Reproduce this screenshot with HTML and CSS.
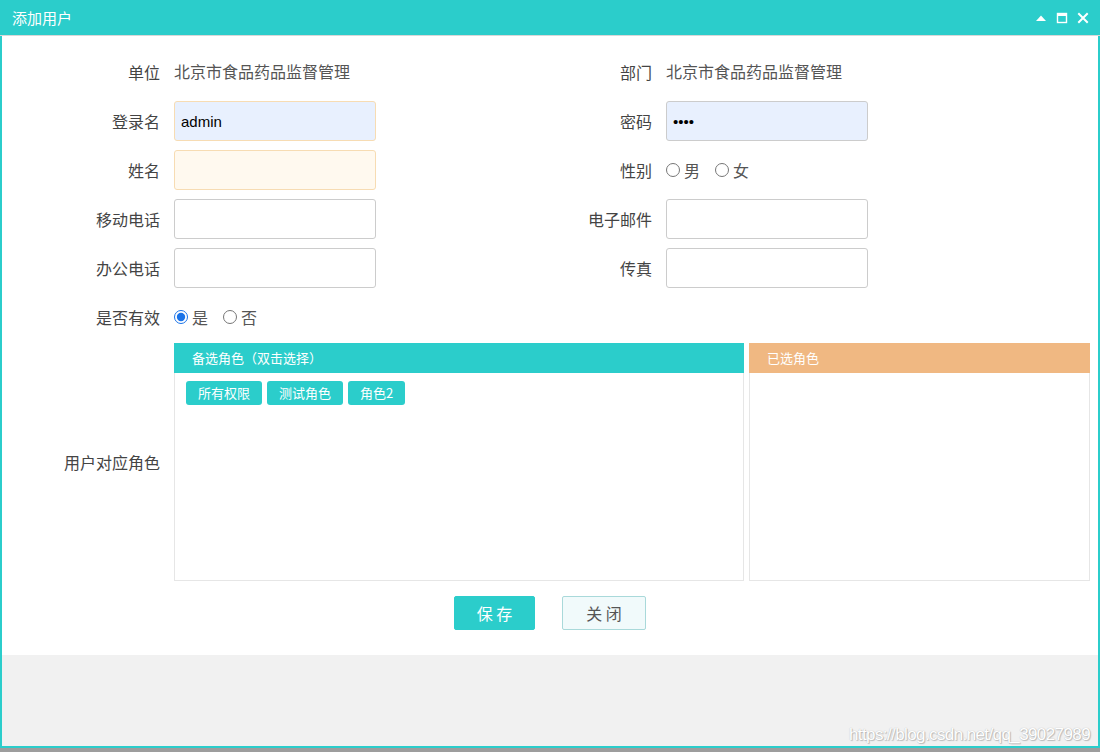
FILE: index.html
```html
<!DOCTYPE html>
<html lang="zh">
<head>
<meta charset="utf-8">
<title>添加用户</title>
<link rel="stylesheet" href="styles.css">
</head>
<body>
<div class="window">
  <div class="titlebar">
    <span class="title">添加用户</span>
    <div class="tools">
      <svg width="12" height="12" viewBox="0 0 12 12"><path d="M1 9 L6 3.5 L11 9 Z" fill="#fff"/></svg>
      <svg width="12" height="12" viewBox="0 0 12 12"><rect x="1.5" y="1.5" width="9" height="9" fill="none" stroke="#fff" stroke-width="1.4"/><rect x="1" y="1" width="10" height="3" fill="#fff"/></svg>
      <svg width="12" height="12" viewBox="0 0 12 12"><path d="M2 2 L10 10 M10 2 L2 10" stroke="#fff" stroke-width="2" stroke-linecap="square"/></svg>
    </div>
  </div>
  <div class="content">
    <div class="form">
      <div class="row">
        <div class="half">
          <label class="lbl">单位</label>
          <span class="val">北京市食品药品监督管理</span>
        </div>
        <div class="half right">
          <label class="lbl">部门</label>
          <span class="val">北京市食品药品监督管理</span>
        </div>
      </div>
      <div class="row">
        <div class="half">
          <label class="lbl">登录名</label>
          <input class="inp autofill req" type="text" value="admin">
        </div>
        <div class="half right">
          <label class="lbl">密码</label>
          <input class="inp autofill" type="password" value="1234">
        </div>
      </div>
      <div class="row">
        <div class="half">
          <label class="lbl">姓名</label>
          <input class="inp req soft" type="text">
        </div>
        <div class="half right">
          <label class="lbl">性别</label>
          <span class="radios">
            <label class="radio"><input type="radio" name="sex">男</label>
            <label class="radio"><input type="radio" name="sex">女</label>
          </span>
        </div>
      </div>
      <div class="row">
        <div class="half">
          <label class="lbl">移动电话</label>
          <input class="inp" type="text">
        </div>
        <div class="half right">
          <label class="lbl">电子邮件</label>
          <input class="inp" type="text">
        </div>
      </div>
      <div class="row">
        <div class="half">
          <label class="lbl">办公电话</label>
          <input class="inp" type="text">
        </div>
        <div class="half right">
          <label class="lbl">传真</label>
          <input class="inp" type="text">
        </div>
      </div>
      <div class="row">
        <div class="half">
          <label class="lbl">是否有效</label>
          <span class="radios">
            <label class="radio"><input type="radio" name="valid" checked>是</label>
            <label class="radio"><input type="radio" name="valid">否</label>
          </span>
        </div>
      </div>
      <div class="roles-row">
        <label class="lbl">用户对应角色</label>
        <div class="panels">
          <div class="panel avail">
            <div class="panel-head">备选角色（双击选择）</div>
            <div class="panel-body">
              <span class="tag">所有权限</span>
              <span class="tag">测试角色</span>
              <span class="tag">角色2</span>
            </div>
          </div>
          <div class="panel chosen">
            <div class="panel-head">已选角色</div>
            <div class="panel-body"></div>
          </div>
        </div>
      </div>
      <div class="buttons">
        <button class="btn primary">保 存</button>
        <button class="btn plain">关 闭</button>
      </div>
    </div>
    <div class="footer-area">
      <span class="watermark">https://blog.csdn.net/qq_39027989</span>
    </div>
  </div>
</div>
</body>
</html>
```
FILE: styles.css
```css
html, body {
  margin: 0;
  padding: 0;
  background: #9d9d9d;
  font-family: "Noto Sans CJK SC", "Microsoft YaHei", sans-serif;
}
.window {
  width: 1100px;
  height: 748px;
  box-sizing: border-box;
  border: 2px solid #2bcdcb;
  border-top: 0;
  background: #fff;
  display: flex;
  flex-direction: column;
}
.titlebar {
  height: 35px;
  margin: 0 -2px;
  padding: 0 12px;
  background: #2bcdcb;
  border-bottom: 1px solid #d8d8d8;
  display: flex;
  align-items: center;
  justify-content: space-between;
  flex-shrink: 0;
}
.title {
  color: #fff;
  font-size: 15px;
  line-height: 20px;
}
.tools {
  display: flex;
  gap: 9px;
  margin-right: -1px;
}
.tools svg { display: block; }
.content {
  flex: 1;
  display: flex;
  flex-direction: column;
}
.form {
  padding-top: 16px;
  height: 603px;
}
.row {
  display: flex;
  height: 40px;
  margin-bottom: 9px;
}
.half {
  display: flex;
  align-items: center;
  width: 570px;
}
.half.right {
  width: 300px;
}
.lbl {
  width: 158px;
  padding-right: 14px;
  text-align: right;
  font-size: 16px;
  line-height: 22px;
  color: #444;
  flex-shrink: 0;
}
.right .lbl {
  width: 80px;
}
.val {
  font-size: 16px;
  color: #555;
  margin-top: -2px;
}
.inp {
  width: 202px;
  height: 40px;
  box-sizing: border-box;
  border: 1px solid #cccccc;
  border-radius: 3px;
  padding: 0 6px;
  font-family: "Liberation Sans", Arial, sans-serif;
  font-size: 15px;
  color: #000;
  background: #fff;
  outline: none;
}
.inp.autofill {
  background: #e8f0fe;
}
.inp.req {
  border-color: #f7dcb3;
}
.inp.soft {
  background: #fff9ef;
}
.radios {
  display: flex;
  gap: 15px;
  font-size: 16px;
  color: #555;
}
.radio {
  display: flex;
  align-items: center;
}
.radio input {
  margin: 0 4px 0 0;
  width: 14px;
  height: 14px;
  accent-color: #1a73e8;
}
.row:nth-child(6) {
  margin-bottom: 6px;
}
.roles-row {
  display: flex;
  align-items: center;
  height: 238px;
}
.panels {
  display: flex;
  gap: 5px;
  height: 238px;
}
.panel {
  display: flex;
  flex-direction: column;
  border: 1px solid #e6e6e6;
  border-top: 0;
}
.avail { width: 570px; box-sizing: border-box; }
.chosen { width: 341px; box-sizing: border-box; }
.panel-head {
  height: 30px;
  line-height: 30px;
  margin: 0 -1px;
  padding-left: 18px;
  color: #fff;
  font-size: 13px;
}
.avail .panel-head { background: #2bcdcb; }
.chosen .panel-head { background: #f0b882; }
.panel-body {
  flex: 1;
  padding: 8px 11px;
  display: flex;
  align-items: flex-start;
  gap: 5px;
}
.tag {
  display: inline-block;
  height: 24px;
  line-height: 24px;
  padding: 0 12px;
  background: #2bcdcb;
  color: #fff;
  font-size: 13px;
  border-radius: 3px;
}
.buttons {
  display: flex;
  gap: 27px;
  margin-top: 15px;
  padding-left: 452px;
}
.btn {
  height: 34px;
  font-family: "Noto Sans CJK SC", sans-serif;
  font-size: 16px;
  border-radius: 2px;
  padding: 0;
  cursor: pointer;
}
.btn.primary {
  width: 81px;
  background: #2bcdcb;
  border: 1px solid #2bcdcb;
  color: #fff;
}
.btn.plain {
  width: 84px;
  background: #f1fafb;
  border: 1px solid #a9d9da;
  color: #555;
}
.footer-area {
  flex: 1;
  background: #f1f1f1;
  position: relative;
}
.watermark {
  position: absolute;
  right: 8px;
  bottom: 1px;
  font-family: "Liberation Sans", Arial, sans-serif;
  font-size: 17px;
  color: #fff;
  text-shadow: 0 0 1px #aaa, 1px 1px 1px #bbb;
  letter-spacing: -0.6px;
}
```
